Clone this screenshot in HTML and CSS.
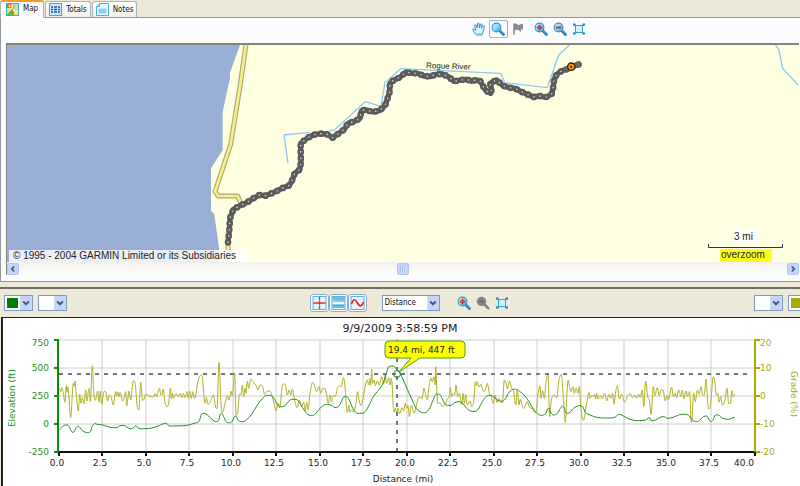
FILE: index.html
```html
<!DOCTYPE html>
<html lang="en">
<head>
<meta charset="utf-8">
<title>Activity map and elevation</title>
<link rel="stylesheet" href="styles.css">
</head>
<body>
<svg class="defs" aria-hidden="true">
  <defs>
    <linearGradient id="glass" x1="0" y1="0" x2="1" y2="1">
      <stop offset="0" stop-color="#e8fbff"/><stop offset=".5" stop-color="#7fd8f8"/><stop offset="1" stop-color="#2aa5e0"/>
    </linearGradient>
    <symbol id="lens" viewBox="0 0 14 14">
      <path d="M8.5 8.5 12.5 12.5" stroke="#1c73b0" stroke-width="2.6" stroke-linecap="round"/>
      <path d="M9 8.6 12.4 12" stroke="#58b4e6" stroke-width="1" stroke-linecap="round"/>
      <circle cx="5.5" cy="5.5" r="4.4" fill="url(#glass)" stroke="#2f97d4" stroke-width="1.1"/>
    </symbol>
    <symbol id="zoom-in" viewBox="0 0 14 14">
      <use href="#lens"/><path d="M5.5 2.800v5.400M2.800 5.500h5.400" stroke="#e8301c" stroke-width="2"/>
    </symbol>
    <symbol id="zoom-out" viewBox="0 0 14 14">
      <use href="#lens"/><path d="M2.800 5.500h5.400" stroke="#e8301c" stroke-width="2"/>
    </symbol>
    <symbol id="zoom-off" viewBox="0 0 14 14">
      <path d="M8.5 8.5 12.3 12.3" stroke="#858585" stroke-width="2.6" stroke-linecap="round"/>
      <circle cx="5.5" cy="5.5" r="4.7" fill="#858585"/><path d="M3.2 5.5h4.6" stroke="#666" stroke-width="1.4"/>
    </symbol>
    <symbol id="extent" viewBox="0 0 14 14">
      <path d="M2 2.500 12 12M12 2.500 2 12" stroke="#3c9bd0" stroke-width="1.2"/>
      <rect x="3.5" y="3.500" width="7" height="7" fill="#cdf1fb" stroke="#35a2d4"/>
      <path d="M1 1.500h2.500v2H1zM10.500 1.500H13v2h-2.500zM1 10.500h2.500v2H1zM10.500 10.500H13v2h-2.500z" fill="#2480b8"/>
    </symbol>
    <symbol id="chevron" viewBox="0 0 11 13">
      <rect width="11" height="13" rx="1" fill="#c4d5fb"/>
      <path d="M2.800 5 5.500 7.700 8.200 5" fill="none" stroke="#45597f" stroke-width="1.800"/>
    </symbol>
  </defs>
</svg>

<main class="app">
  <nav class="tabs">
    <button class="tab tab-active"><svg viewBox="0 0 13 13"><rect x=".5" y=".5" width="12" height="12" fill="#f7e264" stroke="#3da9cc"/><path d="M1 1h5v4H1z" fill="#f0604c"/><path d="M7 1h5v3L8 8z" fill="#a6dfee"/><path d="M1 8l4-2 3 3v3H1z" fill="#55bc5d"/><path d="M6 1v4l3 3 3 1M5 6l-4 4" fill="none" stroke="#fff3a0" stroke-width="1.200"/><path d="M9 2 6 7l1 5" fill="none" stroke="#b38b22" stroke-width=".8"/><circle cx="3.500" cy="3" r="1" fill="#fff"/></svg>Map</button>
    <button class="tab"><svg viewBox="0 0 13 13"><rect x=".5" y=".5" width="12" height="12" fill="#c9f0fa" stroke="#46a5d3"/><path d="M2 4h2M5 4h3M9 4h2M2 6.500h2M5 6.500h3M9 6.500h2M2 9h2M5 9h3M9 9h2" stroke="#2d44ae" stroke-width="1.600"/></svg>Totals</button>
    <button class="tab"><svg viewBox="0 0 13 13"><path d="M3.500.5h9v12H.5V3.500z" fill="#effcff" stroke="#46b1d7"/><path d="M3.500.5v3h-3" fill="#bfeaf7" stroke="#46b1d7"/><path d="M2.500 5.500h8v5h-8z" fill="#8bcdf4"/></svg>Notes</button>
  </nav>

  <section class="map-panel">
    <div class="map-tools">
      <button class="tool" aria-label="Pan"><svg viewBox="0 0 14 14"><path d="M4.500 13 1 8.500C0 7 1.500 6.300 2.500 7.300L3.700 8.500 2.800 4C2.600 2.600 4.100 2.400 4.500 3.600L5.300 6 5.500 2C5.600.7 7.200.7 7.300 2L7.400 5.800 8.500 2.500C9 1.200 10.400 1.800 10.100 3L9.400 6.300 11 4.200C11.800 3.200 13 4 12.400 5.200L11 10 9.800 13z" fill="#e0f8ff" stroke="#2f92cc"/><path d="M5 11.500h4.500" stroke="#8ed5f2"/></svg></button>
      <button class="tool tool-on" aria-label="Zoom" aria-pressed="true"><svg><use href="#lens"/></svg></button>
      <button class="tool" aria-label="Flag"><svg viewBox="0 0 14 14"><path d="M3 1.500v11" stroke="#747474" stroke-width="1.300"/><path d="M3 2c2-1.500 3.500 1.500 5.500.8L12 1.500v6l-2-.3v2.600L7 7.800c-2-.3-2.500.8-4 .3z" fill="#8c8c8c"/></svg></button>
      <span class="tool-group">
        <button class="tool" aria-label="Zoom in"><svg><use href="#zoom-in"/></svg></button>
        <button class="tool" aria-label="Zoom out"><svg><use href="#zoom-out"/></svg></button>
        <button class="tool" aria-label="Fit map"><svg><use href="#extent"/></svg></button>
      </span>
    </div>
    <div class="map-frame">
      <svg class="map" viewBox="7 45 792 217" role="img" aria-label="Route along the Rogue River">
        <rect x="7" y="45" width="792" height="217" fill="#ffffe1"/>
        <g transform="translate(200 40) scale(.33333)" fill="none" stroke-linejoin="round">
          <path class="sea" d="M-579 15H120L90 98v17L68 215V330L33 385V512l10 11L58 632v34H-579z"/>
          <path class="road-edge" d="M140 0 120 140 92 313 45 455l10 13h58l9 22M84 616v20"/>
          <path class="road" d="M140 0 120 140 92 313 45 455l10 13h58l9 22M84 616v20"/>
          <path class="river" d="M264 370 252 285 328 277M388 271 403 270 496 185 543 199 555 128 602 86 902 100 914 128 1042 143 1076 45 1112 12"/>
          <path class="river" d="M1725 12 1737 30 1748 85 1794 135"/>
          <path id="route" class="route-halo" d="M84 607 88 570 90 535 100 508 118 498 140 488 160 475 178 465 197 467 215 460 233 452 250 443 268 436 278 418 284 400 300 388 303 365 302 345V310L322 294 342 284 361 281 380 282 398 293 415 281 433 268 444 250 463 244 480 235 484 213 495 209 520 216 540 211 555 197 563 175 569 155 570 130 582 120 600 112 618 96 635 100H653L672 108 690 110 708 103 727 102 745 110 762 124 782 120 800 118 815 124 827 120 840 122 850 140 858 152 872 160 875 148 870 130 890 120 908 137 927 143 945 145 963 155 982 163 1000 171 1018 168 1037 172 1055 162 1060 140 1062 120 1070 103 1086 92 1100 88 1114 80 1137 73"/>
          <use href="#route" class="route-line"/>
          <use href="#route" class="route-bead"/>
          <use href="#route" class="route-dot"/>
          <path d="M1100 86 1136 73" stroke="#666" stroke-width="16" stroke-linecap="round"/>
          <circle cx="1114" cy="80" r="11" fill="#f98d12" stroke="#35270c" stroke-width="4"/>
          <circle cx="1114" cy="80" r="3" fill="#35270c"/>
        </g>
        <text class="place" x="426" y="68" transform="rotate(2 426 68)">Rogue River</text>
        <path d="M9 250h237v12H9z" fill="#fff" fill-opacity=".8"/>
        <text class="map-text" x="13" y="259">© 1995 - 2004 GARMIN Limited or its Subsidiaries</text>
        <rect x="731" y="230" width="28" height="13" fill="#fff" fill-opacity=".8"/>
        <text class="map-text" x="734" y="240">3 mi</text>
        <path d="M708.500 244v3.500h74V244" fill="none" stroke="#333"/>
        <rect x="720" y="249" width="52" height="13" fill="#ffff1e"/>
        <text class="map-text" x="721" y="258">overzoom</text>
      </svg>
      <div class="scrollbar">
        <button class="scroll-button" aria-label="Scroll left"><svg viewBox="0 0 12 12"><path d="M7.500 3 4.500 6 7.500 9"/></svg></button>
        <span class="scroll-thumb"></span>
        <button class="scroll-button" aria-label="Scroll right"><svg viewBox="0 0 12 12"><path d="M4.500 3 7.500 6 4.500 9"/></svg></button>
      </div>
    </div>
  </section>

  <section class="chart-panel">
    <div class="chart-tools">
      <div class="side">
        <span class="combo"><select class="swatch-green" aria-label="Left axis color"><option></option></select><svg><use href="#chevron"/></svg></span>
        <span class="combo"><select aria-label="Second left axis color"><option></option></select><svg><use href="#chevron"/></svg></span>
      </div>
      <div class="center">
        <span class="toggles">
          <button class="toggle" aria-label="Crosshair"><svg viewBox="0 0 14 14"><rect x=".5" y=".5" width="13" height="13" fill="#e1f7ff" stroke="#5ab3dc"/><path d="M7 1v3M7 10v3M1 7h12M7 4.500v5" stroke="#e23026" stroke-width="1.300"/></svg></button>
          <button class="toggle" aria-label="Bands"><svg viewBox="0 0 14 14"><rect x=".5" y=".5" width="13" height="13" fill="#e8faff" stroke="#5ab3dc"/><path d="M1 2.500h12M1 10.500h12" stroke="#66c0ec" stroke-width="3"/><path d="M1 5h12M1 9h12" stroke="#3a92ca"/></svg></button>
          <button class="toggle" aria-label="Smooth line"><svg viewBox="0 0 14 14"><rect x=".5" y=".5" width="13" height="13" fill="#e1f7ff" stroke="#5ab3dc"/><path d="M1 8C3 2 5 3 7 7s4 4 6-1" fill="none" stroke="#ef1b16" stroke-width="1.700"/></svg></button>
        </span>
        <span class="combo combo-wide"><select aria-label="Horizontal axis"><option>Distance</option></select><svg><use href="#chevron"/></svg></span>
        <span class="tool-group">
          <button class="tool" aria-label="Zoom chart in"><svg><use href="#zoom-in"/></svg></button>
          <button class="tool" aria-label="Zoom chart out" disabled><svg><use href="#zoom-off"/></svg></button>
          <button class="tool" aria-label="Fit chart"><svg><use href="#extent"/></svg></button>
        </span>
      </div>
      <div class="side side-right">
        <span class="combo"><select aria-label="Second right axis color"><option></option></select><svg><use href="#chevron"/></svg></span>
        <span class="combo"><select class="swatch-olive" aria-label="Right axis color"><option></option></select><svg><use href="#chevron"/></svg></span>
      </div>
    </div>
    <div class="chart-frame">
      <svg class="chart" viewBox="3 318 797 168" role="img" aria-label="Elevation and grade by distance">
        <g id="grid" class="grid"></g>
        <path id="grade" class="grade"/>
        <path id="elevation" class="elevation"/>
        <path class="cursor" d="M59 374H752M397 340V451"/>
        <path class="axis axis-x" d="M58 452H756"/>
        <path class="axis axis-left" d="M58 339V453M54 340h4M54 368h4M54 396h4M54 424h4M54 452h4"/>
        <path class="axis axis-right" d="M755 339V453M755 340h5M755 368h5M755 396h5M755 424h5M755 452h5"/>
        <g id="ticks" class="ticks"></g>
        <g class="left-labels">
          <text x="49" y="346">750</text><text x="49" y="371">500</text><text x="49" y="399">250</text><text x="49" y="427">0</text><text x="49" y="455">-250</text>
          <text class="middle" transform="translate(15 398) rotate(-90)">Elevation (ft)</text>
        </g>
        <g class="right-labels">
          <text x="760" y="346">20</text><text x="760" y="371">10</text><text x="760" y="399">0</text><text x="760" y="427">-10</text><text x="760" y="455">-20</text>
          <text class="middle" transform="translate(791 394) rotate(90)">Grade (%)</text>
        </g>
        <text class="middle title" x="400" y="332">9/9/2009 3:58:59 PM</text>
        <text class="middle" x="403" y="482">Distance (mi)</text>
        <path d="M389 341H461q4 0 4 4v9q0 4-4 4H420L399 372 411 358H389q-4 0-4-4v-9q0-4 4-4z" fill="#ff0" stroke="#3ca321"/>
        <circle cx="397" cy="374" r="3.500" fill="none" stroke="#169016"/>
        <text x="388" y="353">19.4 mi, 447 ft</text>
      </svg>
    </div>
  </section>
</main>
<script src="chart.js"></script>
</body>
</html>
```

FILE: chart.js
```js
// Series segments: [left offset, "x,y x,y ..."], in thirds of a chart unit.
const grade = [
  [0, "178,190 182,200 186,188 190,205 195,232 199,182 201,202 203,186 206,205 212,278 220,175 222,184 225,168 228,200 235,258 239,208 243,235 247,218 252,236 257,196 261,228 265,200 268,190 271,230 277,122 281,200 286,226 293,198 297,232 301,198 305,238 311,202 317,200 323,228 328,210 333,215 340,240 347,200 350,212 353,200 357,215 360,203 368,228 372,220 377,200 380,243 387,198 392,225 400,167 406,180 411,240 417,255 422,172 427,222 431,225 436,208 445,212 460,216 466,205 470,216 478,190 483,210 486,210 489,192 495,232 501,245 506,235 511,190 514,220 517,205 520,220 528,205 535,215 541,205 546,218 550,205 555,218 561,200 565,220 569,198 574,220 578,200 584,220 588,205 592,178 598,155 605,150 608,165 613,225 616,235 619,217 624,238 632,228 640,210 648,248 652,240 657,112 663,240 668,262 675,235 682,212 686,225"],
  [600, "90,215 93,198 97,212 104,145 108,270 113,262 118,210 123,208 127,180 131,215 135,190 138,205 142,168 146,190 152,162 160,172 168,182 174,195 180,180 188,185 194,208 200,200 208,198 214,205 222,235 228,258 234,235 239,248 248,178 256,180 262,210 267,195 272,210 277,192 281,210 286,235 291,248 298,225 305,245 311,232 316,256 320,232 324,254 330,205 338,172 343,180 350,200 357,185 362,205 368,190 374,190 379,205 385,235 390,210 394,230 400,212 406,215 412,190 418,182 424,185 430,158 434,175 440,250 443,262 446,240 450,262 455,255 460,262 468,235 473,200 477,225 483,242 490,215 496,180 502,165 506,180 510,160 512,182 515,132 518,175 523,165 526,182 532,168 538,180 545,155 551,178 555,150 560,175 566,158 570,180 574,160 577,190 580,250"],
  [1140, "43,262 46,248 50,265 54,250 59,266 66,248 71,258 76,235 80,250 84,242 88,275 94,240 98,252 103,265 108,248 113,225 120,215 126,222 132,190 136,205 142,225 147,185 153,160 157,170 162,155 166,180 167,125 170,182 173,235 180,233 186,245 194,240 202,222 208,212 211,187 215,215 220,205 224,210 228,180 233,215 238,205 245,240 249,205 253,235 257,208 262,240 270,228 275,245 281,230 286,170 289,182 292,170 297,185 303,178 308,195 313,200 322,175 326,195 329,210 333,212 339,235 345,210 351,232 357,220 363,232 368,228 373,165 378,175 382,192 388,168 395,190 401,200 407,240 412,195 417,240 421,222 427,245 432,250 441,230 446,240 452,250 458,250 463,262 468,262 473,215 480,182 483,220 488,198 493,220 498,170 504,150 509,275 514,225 522,210 530,218 537,165 544,148 550,215 556,293 561,200 565,165 568,182 573,200 579,185 583,205 588,190 594,205 598,185"],
  [1740, "2,240 6,275 11,286 17,250 24,215 27,202 30,220 36,210 42,215 44,208 47,222 50,205 54,222 60,212 66,222 74,205 80,228 87,208 93,220 98,205 102,238 107,200 112,182 118,222 125,208 134,232 142,215 150,205 158,218 165,210 170,220 176,208 181,218 187,195 191,245 197,168 203,215 208,225 213,268 220,185 224,213 232,188 238,212 243,195 250,198 256,228 260,212 265,225 275,186 280,215 285,205 290,218 296,195 303,215 307,195 312,222 318,198 323,215 329,200 333,285 335,292 341,205 346,230 352,195 357,208 363,185 368,210 373,210 378,162 383,235 387,252 392,235 400,155 405,175 409,210 413,205 417,232 422,215 427,240 435,225 441,190 446,235 451,235 456,197 460,215 465,208"]
];
const elevation = [
  [0, "178,315 187,305 197,300 204,301 209,308 214,319 219,322 224,318 229,307 235,304 241,309 248,318 258,322 266,323 272,318 276,305 281,298 286,295 291,298 305,299 320,304 340,308 351,308 360,302 372,302 390,311 399,310 407,302 416,310 435,311 455,309 475,303 487,297 500,295 507,303 520,303 550,302 565,300 582,295 597,289 603,272 608,265 616,266 630,277 642,288 650,290 656,286 660,270 665,265 671,275 677,288"],
  [600, "85,293 94,292 100,282 104,274 108,273 113,283 121,290 130,290 141,283 155,268 172,240 188,220 200,211 210,211 220,217 228,231 236,243 245,245 255,242 264,231 275,223 288,223 298,232 308,248 320,265 334,272 346,267 358,252 370,241 382,238 394,241 405,248 416,244 424,230 432,215 440,215 448,225 456,245 464,259 474,265 494,262 505,245 520,215 545,183 555,160 562,135 570,123 580,123"],
  [1140, "50,133 60,145 70,165 82,193 95,222 107,248 117,258 130,263 140,261 150,248 160,223 167,209 178,208 185,217 193,235 203,241 213,241 224,233 238,230 248,235 260,250 272,258 285,259 295,252 307,230 320,214 332,211 343,217 353,226 365,229 376,222 385,205 397,194 410,193 420,200 435,213 447,230 460,252 472,266 484,271 497,266 502,255 506,249 510,260 520,270 532,265 541,250 548,243 553,250 557,263 566,264 580,250 593,243"],
  [1740, "0,242 8,245 17,263 30,270 50,277 75,279 105,277 112,270 120,268 132,274 150,283 175,287 197,285 205,279 208,277 213,287 225,286 240,277 252,275 262,280 280,277 298,269 318,268 328,273 338,286 350,290 360,285 370,275 380,273 388,285 394,290 400,283 405,271 415,270 428,280 445,283 455,280 465,277"]
];

// Joins the segments and draws a smooth curve through every point.
function curve(segments) {
  const p = segments.flatMap(([dx, text]) => text.split(" ").map(pair => {
    const [x, y] = pair.split(",").map(Number);
    return [(x + dx) / 3, 325 + y / 3];
  }));
  let d = `M${p[0]}`;
  for (let i = 0; i < p.length - 1; i++) {
    const a = p[Math.max(i - 1, 0)], b = p[i], c = p[i + 1], e = p[Math.min(i + 2, p.length - 1)];
    const mid = (c[0] - b[0]) / 3;
    const slope = (u, v, w) => (v[1] - u[1]) * (w[1] - v[1]) <= 0 ? 0 : (w[1] - u[1]) / (w[0] - u[0]);
    const s1 = slope(a, b, c), s2 = slope(b, c, e);
    d += `C${b[0] + mid} ${b[1] + s1 * mid} ${c[0] - mid} ${c[1] - s2 * mid} ${c[0]} ${c[1]}`;
  }
  return d;
}
document.getElementById("grade").setAttribute("d", curve(grade));
document.getElementById("elevation").setAttribute("d", curve(elevation));

let lines = "", ticks = "";
for (let i = 0; i <= 16; i++) {
  const x = Math.round(58.5 + i * 43.53);
  const labelX = i === 16 ? x - 11 : x - 2;
  if (i) lines += `<path d="M${x} 340V452"/>`;
  ticks += `<path d="M${x} 452v4"/><text x="${labelX}" y="466">${(i * 2.5).toFixed(1)}</text>`;
}
for (const y of [340, 368, 396, 424]) lines += `<path d="M58 ${y}H755"/>`;
document.getElementById("grid").innerHTML = lines;
document.getElementById("ticks").innerHTML = ticks;
```

FILE: styles.css
```css
* { box-sizing: border-box; }
body {
  margin: 0;
  background: #ece9d8;
  color: #111;
  font: 8px/12px "DejaVu Sans Condensed", "Open Sans", sans-serif;
}
.defs { position: absolute; width: 0; height: 0; }
button, select { margin: 0; padding: 0; font: inherit; color: inherit; }
svg { display: block; }

.tabs { display: flex; align-items: flex-end; gap: 1px; height: 17px; }
.tab {
  display: flex;
  align-items: center;
  gap: 4px;
  height: 16px;
  padding: 0 3px;
  border: 1px solid #a9b5bb;
  border-bottom: 0;
  border-radius: 3px 3px 0 0;
  background: linear-gradient(#fff, #f1f0e8);
}
.tab svg { width: 13px; height: 13px; }
.tab-active {
  height: 18px;
  margin-bottom: -1px;
  padding: 0 5px 2px;
  border-top: 2px solid #f29a31;
  background: #fcfcfe;
  position: relative;
}

.map-panel {
  padding-bottom: 6px;
  border: solid #919b9c;
  border-width: 1px 0 1px 1px;
  background: #fcfcfe;
}
.map-tools {
  display: flex;
  align-items: center;
  gap: 1px;
  height: 25px;
  padding-left: 59%;
  padding-bottom: 4px;
}
.tool-group { display: flex; gap: 5px; }
.map-tools .tool-group { margin-left: 8px; }
.tool { width: 14px; height: 14px; border: 0; background: none; }
.tool svg { width: 14px; height: 14px; }
.tool-on {
  width: 19px;
  height: 18px;
  margin: 0 2px;
  padding: 0 1px;
  border: 1px solid #98b5cb;
  border-radius: 2px;
  background: #fff;
}
.map-frame {
  margin: 0 1px 0 5px;
  border: solid #85857b;
  border-width: 2px 0 0 1px;
}
.map { width: 100%; height: auto; }
.sea { fill: #99aed5; }
.road-edge { stroke: #aaa68a; stroke-width: 15; }
.road { stroke: #fbf07b; stroke-width: 8; }
.river { stroke: #8ec8f4; stroke-width: 4; }
.route-halo { stroke: #fff; stroke-width: 26; stroke-linecap: round; }
use.route-line, use.route-bead, use.route-dot { fill: none; }
#route { stroke: inherit; stroke-width: inherit; stroke-dasharray: inherit; stroke-linecap: round; }
.route-line { stroke: #5b5b5b; stroke-width: 16; }
.route-bead { stroke: #5b5b5b; stroke-width: 20; stroke-dasharray: 0 19; }
.route-dot { stroke: #ccc; stroke-width: 5; stroke-dasharray: 0 19; }
.place, .map-text { fill: #222; font-family: "Liberation Sans", Arial, sans-serif; }
.place { font-size: 8px; }
.map-text { font-size: 10px; }

.scrollbar {
  display: flex;
  align-items: center;
  justify-content: space-between;
  height: 13px;
  background: linear-gradient(#f2f1ec, #fefefb);
}
.scroll-button, .scroll-thumb {
  width: 12px;
  height: 12px;
  border: 1px solid #b2c7f1;
  border-radius: 2px;
  background: #c3d5fd;
}
.scroll-button svg { width: 10px; height: 10px; fill: none; stroke: #42567d; stroke-width: 2; }
.scroll-thumb {
  background: repeating-linear-gradient(90deg, #a8bce9 0 1px, #dce7ff 1px 2px) center / 6px 6px no-repeat #c3d5fd;
}

.chart-panel { margin-top: 5px; border-top: 2px solid #716f64; }
.chart-tools {
  display: grid;
  grid-template-columns: 1fr auto 1fr;
  align-items: center;
  height: 28px;
  overflow: hidden;
  padding-left: 4px;
}
.side, .center, .toggles { display: flex; align-items: center; }
.side { gap: 5px; }
.side-right { justify-content: flex-end; margin-right: -17px; }
.center { gap: 15px; padding-left: 14px; }
.center .tool-group { margin-left: 2px; }
.toggle {
  width: 19px;
  height: 18px;
  padding: 1px;
  border: 1px solid #8faed0;
  border-radius: 3px;
  background: #fff;
}
.toggle svg { width: 15px; height: 14px; }
.combo { display: grid; width: 29px; height: 16px; }
.combo-wide { width: 58px; }
.combo select, .combo svg { grid-area: 1 / 1; }
.combo select {
  appearance: none;
  width: 100%;
  height: 16px;
  padding: 0 2px;
  border: 1px solid #7f9db9;
  border-radius: 0;
  background: #fff;
}
.combo svg { width: 12px; height: 14px; margin: 1px; justify-self: end; pointer-events: none; }
.combo .swatch-green { background: linear-gradient(#008000, #008000) 2px 2px / 11px 10px no-repeat #fff; }
.combo .swatch-olive { background: linear-gradient(#a8a800, #a8a800) 2px 2px / 11px 10px no-repeat #fff; }

.chart-frame {
  margin-left: 1px;
  border: solid #222;
  border-width: 1px 0 0 2px;
  background: #fff;
}
.chart { width: 100%; height: auto; font: 9px "DejaVu Sans", sans-serif; fill: #222; }
.grid { stroke: #ccc; stroke-width: 1; }
.grade, .elevation { fill: none; stroke-width: 1; stroke-linejoin: round; }
.grade { stroke: #b0b021; }
.elevation { stroke: #249124; }
.cursor { fill: none; stroke: #777; stroke-width: 2; stroke-dasharray: 4 5; }
.axis { fill: none; stroke-width: 2; }
.axis-x, .ticks path { stroke: #111; stroke-width: 2; }
.axis-left { stroke: #079007; }
.axis-right { stroke: #aaaa00; }
.ticks, .middle { text-anchor: middle; }
.left-labels { fill: #249124; text-anchor: end; }
.right-labels { fill: #aaaa20; }
.left-labels .middle { text-anchor: middle; }
.title { font-size: 11px; }
```
